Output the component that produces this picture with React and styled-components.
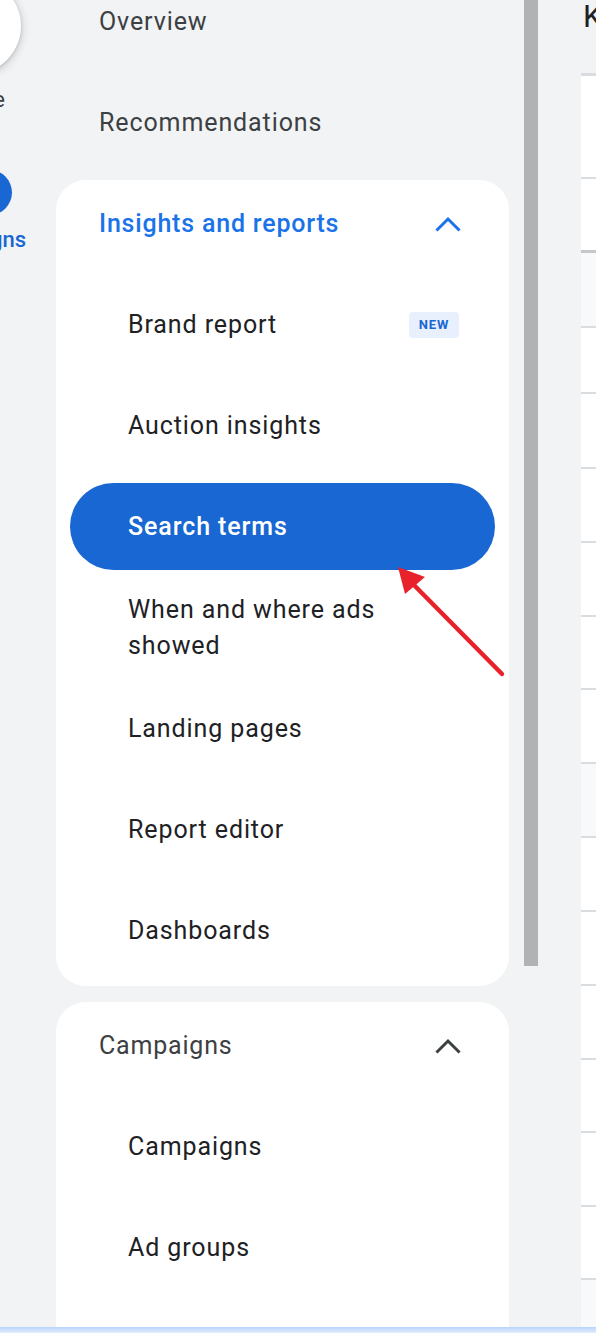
import React from "react";
import styled, { createGlobalStyle } from "styled-components";

const GlobalStyle = createGlobalStyle`
  html, body { margin: 0; padding: 0; }
  body {
    background: #f1f3f4;
    font-family: Roboto, "Noto Sans", "Liberation Sans", sans-serif;
    overflow: hidden;
  }
`;

const Page = styled.div`
  position: relative;
  width: 596px;
  height: 1333px;
  display: flex;
  flex-direction: column;
  overflow: hidden;
  background: #f1f3f4;
`;

const Body = styled.div`
  height: 1327px;
  display: grid;
  grid-template-columns: 56px 453px 15px 14px 43px 1fr;
  overflow: hidden;
`;

const BottomStrip = styled.div`
  height: 6px;
  background: linear-gradient(#b9d4fb, #e2edfd);
`;

const Rail = styled.div`
  display: flex;
  flex-direction: column;
  align-items: flex-end;
  width: 56px;
  overflow: visible;
`;

const RailButton = styled.div`
  width: 96px;
  height: 96px;
  border-radius: 50%;
  background: #fff;
  margin: -22px 35px 0 0;
  box-shadow: 0 2px 8px rgba(60, 64, 67, 0.28), 0 1px 3px rgba(60, 64, 67, 0.15);
  flex-shrink: 0;
`;

const RailLabel = styled.div`
  font-size: 22px;
  font-weight: ${(p) => (p.$active ? 500 : 400)};
  color: ${(p) => (p.$active ? "#1967d2" : "#3c4043")};
  white-space: nowrap;
  margin-right: ${(p) => p.$right}px;
  margin-top: ${(p) => p.$top}px;
  line-height: 26px;
  flex-shrink: 0;
`;

const RailIconPill = styled.div`
  width: 88px;
  height: 45px;
  border-radius: 23px;
  background: #1967d2;
  margin-right: 44px;
  margin-top: 57px;
  flex-shrink: 0;
`;

const Nav = styled.nav`
  display: flex;
  flex-direction: column;
  gap: 14px;
  margin-top: -22px;
`;

const TopItem = styled.div`
  min-height: 87px;
  display: flex;
  align-items: center;
  padding-left: 43px;
  font-size: 25px;
  letter-spacing: 0.9px;
  color: #3c4043;
`;

const Card = styled.div`
  background: #fff;
  border-radius: 30px;
  display: flex;
  flex-direction: column;
  gap: 14px;
  padding-bottom: 12px;
  & + & {
    margin-top: 2px;
  }
`;

const SectionHeader = styled.div`
  min-height: 87px;
  display: flex;
  align-items: center;
  justify-content: space-between;
  padding: 0 48px 0 43px;
  font-size: 25px;
  letter-spacing: 0.8px;
  font-weight: ${(p) => (p.$open ? 500 : 400)};
  color: ${(p) => (p.$accent ? "#1a73e8" : "#3c4043")};
`;

const SubItem = styled.div`
  min-height: 87px;
  box-sizing: border-box;
  margin: 0 14px;
  padding: 7px 30px 7px 58px;
  border-radius: 44px;
  display: flex;
  align-items: center;
  justify-content: space-between;
  font-size: 25px;
  letter-spacing: 0.9px;
  line-height: 36px;
  color: ${(p) => (p.$selected ? "#fff" : "#202124")};
  background: ${(p) => (p.$selected ? "#1967d2" : "transparent")};
  font-weight: ${(p) => (p.$selected ? 500 : 400)};
`;

const SubText = styled.span`
  max-width: 290px;
`;

const NewBadge = styled.span`
  display: inline-flex;
  align-items: center;
  justify-content: center;
  width: 50px;
  height: 26px;
  border-radius: 4px;
  background: #e8f0fe;
  color: #1967d2;
  font-size: 13px;
  font-weight: 700;
  letter-spacing: 0.8px;
  line-height: 1;
  margin-right: 6px;
  flex-shrink: 0;
`;

const ScrollTrack = styled.div`
  grid-column: 4;
  display: flex;
  flex-direction: column;
`;

const ScrollThumb = styled.div`
  height: 966px;
  background: #b1b2b4;
`;

const Main = styled.main`
  grid-column: 6;
  overflow: hidden;
  display: flex;
  flex-direction: column;
`;

const Title = styled.h1`
  margin: 0 0 0 2px;
  height: 73px;
  font-size: 31px;
  font-weight: 400;
  line-height: 34px;
  color: #202124;
  white-space: nowrap;
`;

const Table = styled.div`
  display: flex;
  flex-direction: column;
  background: #fff;
  border-top: 3px solid #dadce0;
  flex: 1;
`;

const Row = styled.div`
  height: ${(p) => p.$h}px;
  box-sizing: border-box;
  border-bottom: ${(p) => (p.$thick ? "3px solid #c6c7c9" : "2px solid #dadce0")};
  background: ${(p) => (p.$shade ? "#f8f9fa" : "#fff")};
  flex-shrink: 0;
`;

const RowFill = styled.div`
  flex: 1;
  background: #f8f9fa;
`;

const ArrowOverlay = styled.svg`
  position: absolute;
  left: 0;
  top: 0;
  pointer-events: none;
`;

const Chevron = ({ color }) => (
  <svg width="26" height="16" viewBox="0 0 26 16" aria-hidden="true">
    <polyline
      points="2.5,13.5 13,3 23.5,13.5"
      fill="none"
      stroke={color}
      strokeWidth="3"
      strokeLinecap="square"
    />
  </svg>
);

const rows = [
  { h: 103 },
  { h: 74, thick: true },
  { h: 75, shade: true },
  { h: 66 },
  { h: 75 },
  { h: 74 },
  { h: 74 },
  { h: 73 },
  { h: 74 },
  { h: 74, shade: true },
  { h: 74 },
  { h: 74 },
  { h: 74 },
  { h: 73 },
  { h: 74 },
  { h: 73 },
];

export default function App() {
  return (
    <>
      <GlobalStyle />
      <Page>
        <Body>
          <Rail>
            <RailButton />
            <RailLabel $right={51} $top={13}>Create</RailLabel>
            <RailIconPill />
            <RailLabel $active $right={30} $top={12}>Campaigns</RailLabel>
          </Rail>

          <Nav>
            <TopItem>Overview</TopItem>
            <TopItem>Recommendations</TopItem>
            <Card>
              <SectionHeader $accent $open>
                <span>Insights and reports</span>
                <Chevron color="#1a73e8" />
              </SectionHeader>
              <SubItem>
                <SubText>Brand report</SubText>
                <NewBadge>NEW</NewBadge>
              </SubItem>
              <SubItem>
                <SubText>Auction insights</SubText>
              </SubItem>
              <SubItem $selected>
                <SubText>Search terms</SubText>
              </SubItem>
              <SubItem>
                <SubText>When and where ads showed</SubText>
              </SubItem>
              <SubItem>
                <SubText>Landing pages</SubText>
              </SubItem>
              <SubItem>
                <SubText>Report editor</SubText>
              </SubItem>
              <SubItem>
                <SubText>Dashboards</SubText>
              </SubItem>
            </Card>
            <Card>
              <SectionHeader>
                <span>Campaigns</span>
                <Chevron color="#3c4043" />
              </SectionHeader>
              <SubItem>
                <SubText>Campaigns</SubText>
              </SubItem>
              <SubItem>
                <SubText>Ad groups</SubText>
              </SubItem>
              <SubItem>
                <SubText>Ads</SubText>
              </SubItem>
            </Card>
          </Nav>

          <ScrollTrack>
            <ScrollThumb />
          </ScrollTrack>

          <Main>
            <Title>Keywords</Title>
            <Table>
              {rows.map((r, i) => (
                <Row key={i} $h={r.h} $thick={r.thick} $shade={r.shade} />
              ))}
              <RowFill />
            </Table>
          </Main>
        </Body>
        <BottomStrip />

        <ArrowOverlay width="596" height="1333" viewBox="0 0 596 1333">
          <line
            x1="502"
            y1="674"
            x2="409"
            y2="580"
            stroke="#e8222b"
            strokeWidth="4.5"
            strokeLinecap="round"
          />
          <polygon points="398,567 405,594 425,577" fill="#e8222b" />
        </ArrowOverlay>
      </Page>
    </>
  );
}
